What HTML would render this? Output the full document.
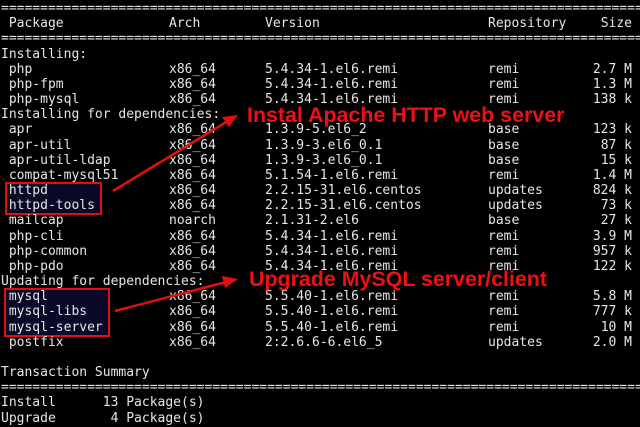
<!DOCTYPE html>
<html><head><meta charset="utf-8"><style>
html,body{margin:0;padding:0;background:#000;}
#w{position:relative;width:640px;height:427px;overflow:hidden;background:#000;font-family:"DejaVu Sans Mono","Liberation Mono",monospace;font-size:13px;color:#e6e6e6;}
.r{position:absolute;left:0;height:15px;line-height:15px;white-space:pre;width:640px;}
.r span{position:absolute;top:0;}
.a{left:169px}.v{left:265px}.p{left:488px}.s{right:8px}
.box{position:absolute;border:2px solid #e01010;background:#0a0a28;}
.red{position:absolute;color:#f01010;font-family:"Liberation Sans",sans-serif;font-weight:bold;font-size:21.4px;white-space:nowrap;}
</style></head><body><div id="w">
<div class="box" style="left:5px;top:182px;width:93px;height:29px"></div>
<div class="box" style="left:4px;top:288px;width:102px;height:45px"></div>
<div id="t"></div>
<div class="red" style="left:247px;top:103px">Instal Apache HTTP web server</div>
<div class="red" style="left:249px;top:267px">Upgrade MySQL server/client</div>
<svg style="position:absolute;left:0;top:0" width="640" height="427">
<line x1="113" y1="191" x2="228" y2="121" stroke="#e01010" stroke-width="2.5"/>
<polygon points="238,115 222,117 229,127" fill="#e01010"/>
<line x1="115" y1="311" x2="226" y2="282" stroke="#e01010" stroke-width="2.5"/>
<polygon points="238,279 222,276 225,288" fill="#e01010"/>
</svg>
</div>
<script>
var L=[
["==================================================================================="],
[" Package","Arch","Version","Repository","Size"],
["==================================================================================="],
["Installing:"],
[" php","x86_64","5.4.34-1.el6.remi","remi","2.7 M"],
[" php-fpm","x86_64","5.4.34-1.el6.remi","remi","1.3 M"],
[" php-mysql","x86_64","5.4.34-1.el6.remi","remi","138 k"],
["Installing for dependencies:"],
[" apr","x86_64","1.3.9-5.el6_2","base","123 k"],
[" apr-util","x86_64","1.3.9-3.el6_0.1","base","87 k"],
[" apr-util-ldap","x86_64","1.3.9-3.el6_0.1","base","15 k"],
[" compat-mysql51","x86_64","5.1.54-1.el6.remi","remi","1.4 M"],
[" httpd","x86_64","2.2.15-31.el6.centos","updates","824 k"],
[" httpd-tools","x86_64","2.2.15-31.el6.centos","updates","73 k"],
[" mailcap","noarch","2.1.31-2.el6","base","27 k"],
[" php-cli","x86_64","5.4.34-1.el6.remi","remi","3.9 M"],
[" php-common","x86_64","5.4.34-1.el6.remi","remi","957 k"],
[" php-pdo","x86_64","5.4.34-1.el6.remi","remi","122 k"],
["Updating for dependencies:"],
[" mysql","x86_64","5.5.40-1.el6.remi","remi","5.8 M"],
[" mysql-libs","x86_64","5.5.40-1.el6.remi","remi","777 k"],
[" mysql-server","x86_64","5.5.40-1.el6.remi","remi","10 M"],
[" postfix","x86_64","2:2.6.6-6.el6_5","updates","2.0 M"],
[""],
["Transaction Summary"],
["==================================================================================="],
["Install      13 Package(s)"],
["Upgrade       4 Package(s)"]];
var h="",c=["","a","v","p","s"];
L.forEach(function(r,i){h+='<div class="r" style="top:'+(1+i*15.17).toFixed(2)+'px"><span style="left:1px">'+r[0]+'</span>';for(var j=1;j<r.length;j++)h+='<span class="'+c[j]+'">'+r[j]+'</span>';h+='</div>';});
document.getElementById("t").innerHTML=h;
</script>
</body></html>
